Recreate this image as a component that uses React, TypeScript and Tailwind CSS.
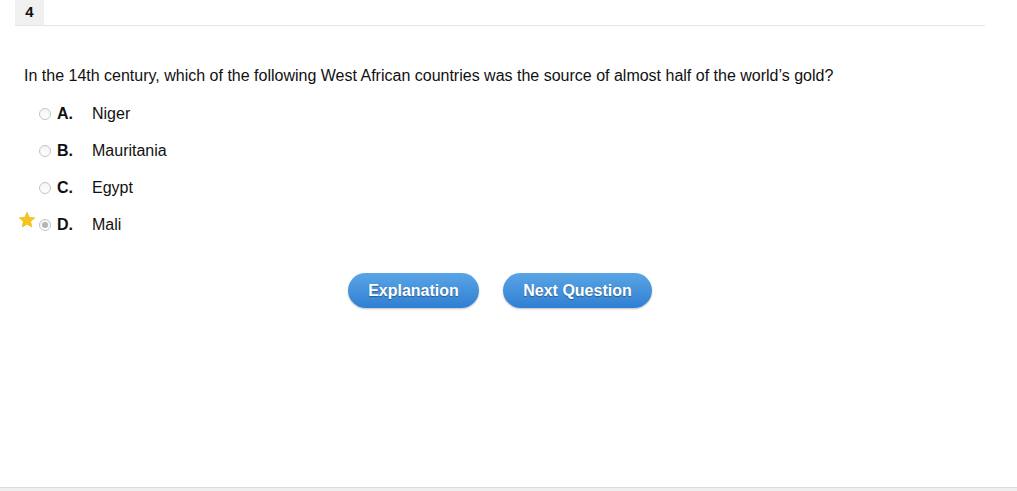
const OPTIONS = [
  { letter: 'A.', text: 'Niger' },
  { letter: 'B.', text: 'Mauritania' },
  { letter: 'C.', text: 'Egypt' },
  { letter: 'D.', text: 'Mali', selected: true },
];

function Star() {
  return (
    <svg viewBox="0 0 24 24" className="h-[18px] w-[18px]">
      <path
        d="M12 1.5l3.1 6.9 7.4.7-5.6 5 1.7 7.4L12 17.6l-6.6 3.9 1.7-7.4-5.6-5 7.4-.7z"
        fill="#f5c518"
        stroke="#e0b000"
        strokeWidth={0.6}
      />
    </svg>
  );
}

function Radio({ checked }: { checked?: boolean }) {
  return (
    <span className="flex h-[12px] w-[12px] items-center justify-center rounded-full border border-[#c4c4c4] bg-gradient-to-b from-[#f4f4f4] to-white">
      {checked && <span className="h-[6px] w-[6px] rounded-full bg-[#b4b4b4]" />}
    </span>
  );
}

export default function App() {
  return (
    <div
      className="relative h-[491px] w-[1017px] bg-white text-[#111]"
      style={{ fontFamily: '"Liberation Sans", Arial, sans-serif' }}
    >
      {/* Tab header */}
      <div className="ml-[15px] mr-[32px] flex border-b border-[#e6e6e6]">
        <div className="flex h-[25px] w-[29px] items-center justify-center bg-[#f0f0f0] text-[15px] font-bold">
          4
        </div>
      </div>

      {/* Question */}
      <div className="pl-[24px] pt-[41px]">
        <p className="text-[16px] leading-[18px]">
          In the 14th century, which of the following West African countries was the source of almost half of the world’s gold?
        </p>

        <div className="mt-[10px] flex flex-col">
          {OPTIONS.map((opt) => (
            <div key={opt.letter} className="relative flex h-[37px] items-center pl-[15px]">
              {opt.selected && (
                <span className="absolute left-[-6px] top-[5px]">
                  <Star />
                </span>
              )}
              <Radio checked={opt.selected} />
              <span className="ml-[6px] w-[35px] text-[16px] font-bold">{opt.letter}</span>
              <span className="text-[16px]">{opt.text}</span>
            </div>
          ))}
        </div>
      </div>

      {/* Buttons */}
      <div className="mt-[30px] flex justify-center gap-[24px] pr-[17px]">
        <button className="h-[35px] w-[131px] rounded-full bg-gradient-to-b from-[#5aa5e6] to-[#2f7fd2] text-[16px] font-bold text-white shadow-[0_1px_2px_rgba(0,0,0,0.25)] [text-shadow:0_1px_1px_rgba(0,0,0,0.35)]">
          Explanation
        </button>
        <button className="h-[35px] w-[149px] rounded-full bg-gradient-to-b from-[#5aa5e6] to-[#2f7fd2] text-[16px] font-bold text-white shadow-[0_1px_2px_rgba(0,0,0,0.25)] [text-shadow:0_1px_1px_rgba(0,0,0,0.35)]">
          Next Question
        </button>
      </div>

      {/* Bottom band */}
      <div className="absolute bottom-0 left-0 h-[4px] w-full border-t border-[#dcdcdc] bg-[#efefef]" />
    </div>
  );
}
